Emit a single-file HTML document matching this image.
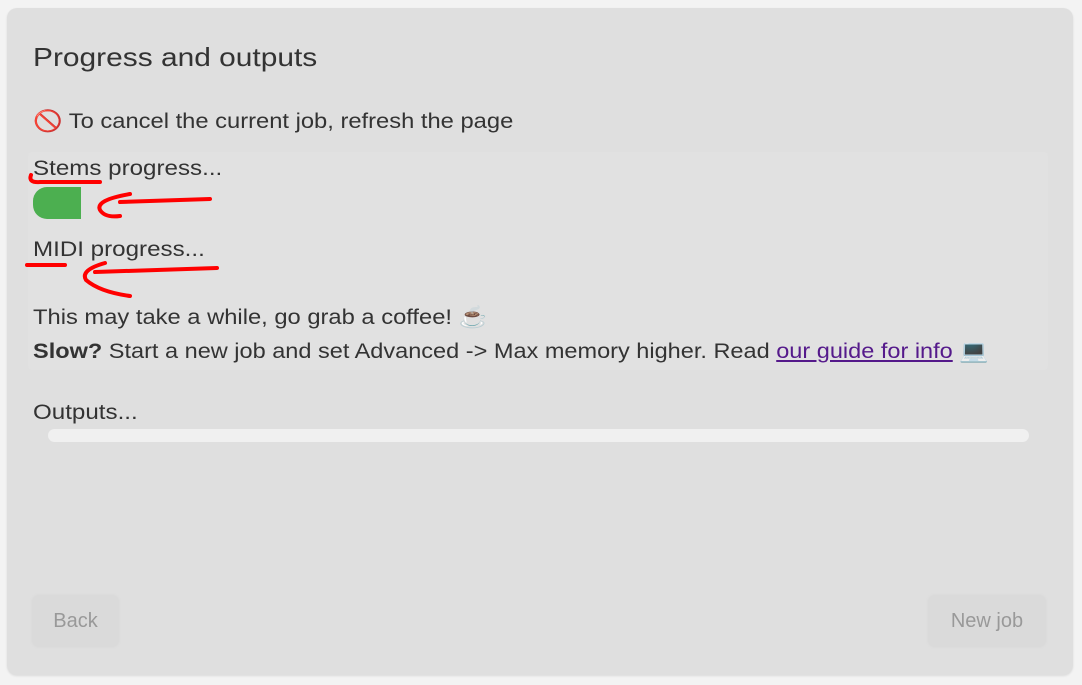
<!DOCTYPE html>
<html><head><style>
body{margin:0;width:1082px;height:685px;background:#f3f3f3;font-family:"Liberation Sans",sans-serif;color:#333;position:relative;overflow:hidden}
.card{position:absolute;left:7px;top:8px;width:1066px;height:667px;background:#dfdfdf;border-radius:10px;box-shadow:0 1px 2px rgba(0,0,0,.1)}
.t{position:absolute;white-space:nowrap;font-size:21px;transform:scaleX(1.15);transform-origin:0 0}
.inner{position:absolute;left:28px;top:152px;width:1020px;height:218px;background:#e1e1e1;border-radius:4px}
.btn{position:absolute;top:596px;height:50px;background:#dadada;border-radius:5px;color:#999;font-size:20px;line-height:50px;text-align:center;box-shadow:0 0 4px rgba(0,0,0,.06)}
a{color:#551a8b;text-decoration:underline}
</style></head><body>
<div class="card"></div>
<div class="inner"></div>
<div class="t" style="left:33px;top:42px;font-size:26px">Progress and outputs</div>
<div class="t" style="left:33px;top:110px;transform:scaleX(1.13)"><span style="color:#d33">🚫</span> To cancel the current job, refresh the page</div>
<div class="t" style="left:33px;top:157px">Stems progress...</div>
<div style="position:absolute;left:33px;top:187px;width:48px;height:32px;background:#4caf50;border-radius:14px 0 0 14px"></div>
<div class="t" style="left:33px;top:238px">MIDI progress...</div>
<div class="t" style="left:33px;top:306px;transform:scaleX(1.13)">This may take a while, go grab a coffee! ☕</div>
<div class="t" style="left:33px;top:340px;transform:scaleX(1.12)"><b>Slow?</b> Start a new job and set Advanced -&gt; Max memory higher. Read <a>our guide for info</a> 💻</div>
<div class="t" style="left:33px;top:401px">Outputs...</div>
<div style="position:absolute;left:48px;top:429px;width:981px;height:13px;background:#f0f0f0;border-radius:7px"></div>
<svg style="position:absolute;left:0;top:0" width="1082" height="685" fill="none" stroke="#f00" stroke-width="4" stroke-linecap="round">
<path d="M31 175 Q28 183 40 182 L100 182"/>
<path d="M210 199 L120 202 M130 194 Q95 200 100 210 Q105 218 120 216"/>
<path d="M27 265 L65 265"/>
<path d="M217 268 L95 272 M105 263 Q80 270 86 280 Q100 292 130 296"/>
</svg>
<div class="btn" style="left:33px;width:85px">Back</div>
<div class="btn" style="left:929px;width:116px">New job</div>
</body></html>
